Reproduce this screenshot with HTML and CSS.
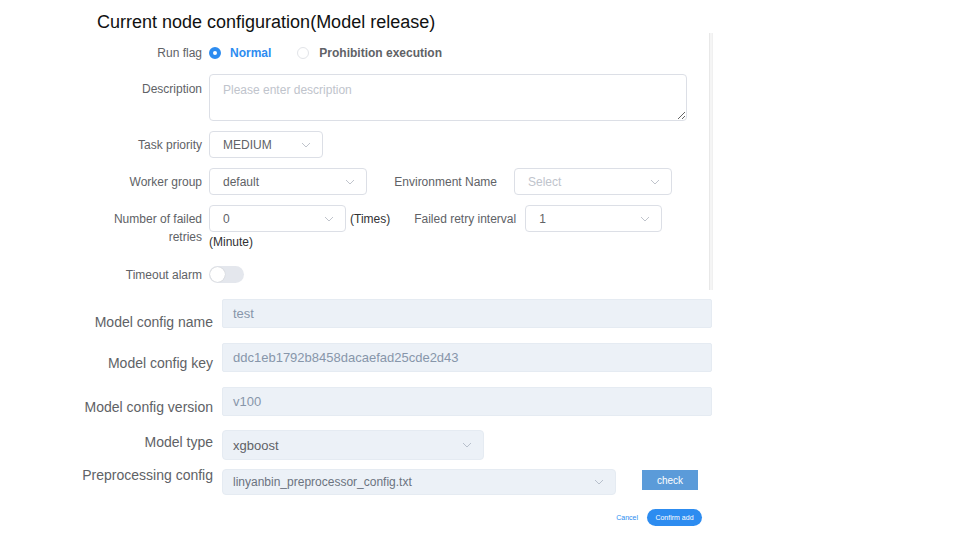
FILE: index.html
```html
<!DOCTYPE html>
<html>
<head>
<meta charset="utf-8">
<link rel="stylesheet" href="styles.css">
</head>
<body>
<h1 class="title">Current node configuration(Model release)</h1>
<div class="panel">
  <div class="panel-body">
    <div class="row row-radio">
      <span class="lbl">Run flag</span>
      <span class="radio checked"><span class="dot"></span><span class="rtext">Normal</span></span>
      <span class="radio"><span class="dot"></span><span class="rtext">Prohibition execution</span></span>
    </div>
    <div class="row row-desc">
      <span class="lbl lbl-desc">Description</span>
      <textarea class="textarea" placeholder="Please enter description"></textarea>
    </div>
    <div class="row row-sel">
      <span class="lbl">Task priority</span>
      <div class="select w-priority"><span class="val">MEDIUM</span><svg class="chev" width="10" height="6" viewBox="0 0 10 6"><polyline points="1,1 5,5 9,1" fill="none" stroke="#c0c4cc" stroke-width="1"/></svg></div>
    </div>
    <div class="row row-sel">
      <span class="lbl">Worker group</span>
      <div class="select w-worker"><span class="val">default</span><svg class="chev" width="10" height="6" viewBox="0 0 10 6"><polyline points="1,1 5,5 9,1" fill="none" stroke="#c0c4cc" stroke-width="1"/></svg></div>
      <span class="lbl lbl-env">Environment Name</span>
      <div class="select w-env"><span class="val ph">Select</span><svg class="chev" width="10" height="6" viewBox="0 0 10 6"><polyline points="1,1 5,5 9,1" fill="none" stroke="#c0c4cc" stroke-width="1"/></svg></div>
    </div>
    <div class="row row-retry">
      <span class="lbl lbl-two">Number of failed retries</span>
      <div class="retry-ctrls">
        <div class="select w-retry"><span class="val">0</span><svg class="chev" width="10" height="6" viewBox="0 0 10 6"><polyline points="1,1 5,5 9,1" fill="none" stroke="#c0c4cc" stroke-width="1"/></svg></div>
        <span class="unit">(Times)</span>
        <span class="lbl lbl-interval">Failed retry interval</span>
        <div class="select w-retry"><span class="val">1</span><svg class="chev" width="10" height="6" viewBox="0 0 10 6"><polyline points="1,1 5,5 9,1" fill="none" stroke="#c0c4cc" stroke-width="1"/></svg></div>
        <span class="unit unit-min">(Minute)</span>
      </div>
    </div>
    <div class="row row-timeout">
      <span class="lbl">Timeout alarm</span>
      <span class="switch"><span class="knob"></span></span>
    </div>
  </div>
  <div class="track"></div>
</div>

<div class="form">
  <div class="frow r-name">
    <span class="flbl">Model config name</span>
    <div class="finput">test</div>
  </div>
  <div class="frow r-key">
    <span class="flbl">Model config key</span>
    <div class="finput">ddc1eb1792b8458dacaefad25cde2d43</div>
  </div>
  <div class="frow r-ver">
    <span class="flbl">Model config version</span>
    <div class="finput">v100</div>
  </div>
  <div class="frow r-type">
    <span class="flbl">Model type</span>
    <div class="fselect w-type"><span class="fval">xgboost</span><svg class="chev" width="10" height="6" viewBox="0 0 10 6"><polyline points="1,1 5,5 9,1" fill="none" stroke="#b8c0cc" stroke-width="1"/></svg></div>
  </div>
  <div class="frow r-pre">
    <span class="flbl">Preprocessing config</span>
    <div class="fselect w-pre"><span class="fval small">linyanbin_preprocessor_config.txt</span><svg class="chev" width="10" height="6" viewBox="0 0 10 6"><polyline points="1,1 5,5 9,1" fill="none" stroke="#b8c0cc" stroke-width="1"/></svg></div>
    <button class="check">check</button>
  </div>
  <div class="footer">
    <span class="cancel">Cancel</span>
    <button class="confirm">Confirm add</button>
  </div>
</div>
</body>
</html>
```
FILE: styles.css
```css
body {
  margin: 0;
  background: #fff;
  font-family: "Liberation Sans", Arial, Helvetica, sans-serif;
}
.title {
  margin: 0;
  padding: 11px 0 0 97px;
  font-size: 18px;
  font-weight: normal;
  line-height: 22px;
  color: #111;
}
.panel {
  display: flex;
  margin-left: 90px;
  width: 623px;
  height: 257px;
}
.panel-body {
  flex: 1;
}
.track {
  width: 5px;
  background: #f5f5f5;
  border-left: 1px solid #e8e8e8;
  border-right: 1px solid #f0f0f0;
}
.row {
  display: flex;
  align-items: center;
}
.lbl {
  flex-shrink: 0;
  width: 112px;
  margin-right: 7px;
  text-align: right;
  font-size: 12px;
  color: #606266;
}
.row-radio {
  margin-top: 8px;
  height: 24px;
}
.radio {
  display: flex;
  align-items: center;
  font-size: 12px;
  font-weight: bold;
  color: #606266;
}
.radio .dot {
  box-sizing: border-box;
  width: 12px;
  height: 12px;
  border-radius: 50%;
  border: 1px solid #e2e4e8;
  background: #fff;
  margin-right: 10px;
}
.radio.checked .dot {
  border: 4px solid #2d8cf0;
  margin-right: 9px;
}
.radio.checked {
  color: #2d8cf0;
  margin-right: 26px;
}
.row-desc {
  margin-top: 9px;
  align-items: flex-start;
}
.lbl-desc {
  line-height: 30px;
}
.textarea {
  box-sizing: border-box;
  width: 478px;
  height: 47px;
  margin: 0;
  padding: 7px 13px;
  border: 1px solid #dcdfe6;
  border-radius: 4px;
  font-family: inherit;
  font-size: 12px;
  line-height: 16px;
  color: #606266;
  outline: none;
}
.textarea::placeholder {
  color: #c0c4cc;
}
.row-sel {
  margin-top: 10px;
  height: 27px;
}
.select {
  box-sizing: border-box;
  display: flex;
  align-items: center;
  justify-content: space-between;
  height: 27px;
  padding: 0 11px 0 13px;
  border: 1px solid #dcdfe6;
  border-radius: 4px;
  font-size: 12px;
  color: #606266;
}
.select .ph {
  color: #c0c4cc;
}
.w-priority { width: 114px; }
.w-worker { width: 158px; }
.w-env { width: 158px; }
.w-retry { width: 137px; }
.lbl-env {
  width: 130px;
  margin-right: 17px;
}
.row-retry {
  margin-top: 10px;
  align-items: flex-start;
}
.lbl-two {
  padding-top: 5px;
  line-height: 18px;
}
.retry-ctrls {
  display: flex;
  flex-wrap: wrap;
  align-items: center;
  width: 500px;
}
.unit {
  font-size: 12px;
  color: #303133;
  margin-left: 4px;
}
.unit-min {
  flex-basis: 100%;
  margin-left: 0;
  line-height: 20px;
}
.lbl-interval {
  width: 126px;
  margin-right: 9px;
}
.row-timeout {
  margin-top: 14px;
  height: 17px;
}
.switch {
  box-sizing: border-box;
  position: relative;
  width: 35px;
  height: 17px;
  border-radius: 9px;
  background: #e4e7ed;
}
.knob {
  position: absolute;
  left: 1px;
  top: 1px;
  width: 15px;
  height: 15px;
  border-radius: 50%;
  background: #fff;
  box-shadow: 0 0 1px rgba(0,0,0,0.25);
}
.form {
  width: 712px;
  margin-top: 9px;
}
.frow {
  display: flex;
  align-items: flex-start;
}
.flbl {
  flex-shrink: 0;
  width: 213px;
  margin-right: 9px;
  text-align: right;
  font-size: 14px;
  line-height: 20px;
  color: #606266;
}
.finput {
  box-sizing: border-box;
  flex: 1;
  height: 29px;
  line-height: 27px;
  padding-left: 10px;
  background: #ecf1f7;
  border: 1px solid #e5ebf2;
  border-radius: 2px;
  font-size: 13px;
  color: #8796aa;
}
.r-name .flbl { padding-top: 13px; }
.r-key { margin-top: 11px; }
.r-key .flbl { padding-top: 10px; }
.r-ver { margin-top: 14px; }
.r-ver .flbl { padding-top: 10px; }
.r-type { margin-top: 13px; }
.r-type .flbl { padding-top: 2px; }
.r-pre { margin-top: 9px; }
.r-pre .flbl { margin-top: -4px; }
.fselect {
  box-sizing: border-box;
  display: flex;
  align-items: center;
  justify-content: space-between;
  padding: 0 11px 0 10px;
  background: #ecf1f7;
  border: 1px solid #e5ebf2;
  border-radius: 4px;
  color: #606266;
}
.fval {
  font-size: 13px;
}
.fval.small {
  font-size: 12px;
  color: #6b7380;
}
.w-type {
  width: 262px;
  height: 30px;
}
.w-pre {
  width: 394px;
  height: 26px;
}
.check {
  margin: 1px 0 0 26px;
  width: 56px;
  height: 20px;
  padding: 0;
  border: none;
  background: #5b9bd9;
  color: #fff;
  font-family: inherit;
  font-size: 10px;
}
.footer {
  display: flex;
  justify-content: flex-end;
  align-items: center;
  margin-top: 14px;
  padding-right: 10px;
}
.cancel {
  font-size: 7px;
  color: #2d8cf0;
  margin-right: 9px;
}
.confirm {
  width: 55px;
  height: 17px;
  padding: 0;
  border: none;
  border-radius: 9px;
  background: #2d8cf0;
  color: #fff;
  font-family: inherit;
  font-size: 7px;
}
```
